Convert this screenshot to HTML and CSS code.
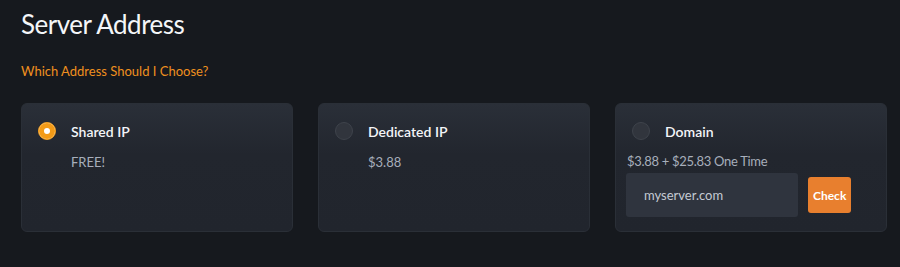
FILE: index.html
```html
<!DOCTYPE html>
<html lang="en">
<head>
    <meta charset="UTF-8">
    <meta name="viewport" content="width=device-width, initial-scale=1.0">
    <title>Server Address</title>
    <link rel="stylesheet" href="styles.css">
</head>
<body>
    <div class="section">
        <h2 class="title">Server Address</h2>
        <a class="help" href="#">Which Address Should I Choose?</a>

        <div class="options">
            <div class="option selected">
                <div class="option-head">
                    <span class="radio"></span>
                    <span class="option-name">Shared IP</span>
                </div>
                <div class="price">FREE!</div>
            </div>

            <div class="option">
                <div class="option-head">
                    <span class="radio"></span>
                    <span class="option-name">Dedicated IP</span>
                </div>
                <div class="price">$3.88</div>
            </div>

            <div class="option">
                <div class="option-head">
                    <span class="radio"></span>
                    <span class="option-name">Domain</span>
                </div>
                <div class="price wide">$3.88 + $25.83 One Time</div>
                <div class="domain-row">
                    <input type="text" class="domain-input" value="myserver.com">
                    <button class="check">Check</button>
                </div>
            </div>
        </div>
    </div>
</body>
</html>
```

FILE: styles.css
```css
body {
    margin: 0;
    background-color: #16191e;
    font-family: Lato, "Open Sans", sans-serif;
    color: #fff;
}

.section {
    padding: 6px 13px 0 21px;
}

.title {
    margin: 0;
    font-size: 26px;
    font-weight: 400;
    line-height: 36px;
    letter-spacing: -0.5px;
    color: #f4f6f9;
}

.help {
    display: block;
    margin-top: 21px;
    font-size: 13px;
    color: #f0901f;
    text-decoration: none;
}

.options {
    display: grid;
    grid-template-columns: repeat(3, 272px);
    gap: 25px;
    margin-top: 24px;
}

.option {
    height: 129px;
    box-sizing: border-box;
    padding: 18px 11px 0 15px;
    border: 1px solid #2a2f37;
    border-radius: 6px;
    background: linear-gradient(#2a2f38, #22262e 40%, #21252d);
}

.option-head {
    display: flex;
    align-items: center;
    gap: 15px;
}

.radio {
    width: 16px;
    height: 16px;
    border: 1px solid #3e434b;
    border-radius: 50%;
    background-color: #31353d;
    margin-left: 1px;
    box-sizing: content-box;
}

.selected .radio {
    border-color: #f39b17;
    background-color: #fff;
    box-shadow: inset 0 0 0 5px #f39b17;
}

.option-name {
    font-size: 14px;
    font-weight: 600;
    color: #f3f5f8;
}

.price {
    margin: 14px 0 0 34px;
    font-size: 13px;
    color: #a7aebb;
}

.price.wide {
    margin: 13px 0 0 -4px;
    letter-spacing: -0.3px;
}

.domain-row {
    display: flex;
    align-items: center;
    gap: 10px;
    margin: 4px 0 0 -5px;
}

.domain-input {
    width: 172px;
    height: 44px;
    box-sizing: border-box;
    padding: 0 18px;
    border: none;
    border-radius: 3px;
    background-color: #2f343e;
    color: #c4cad3;
    font-family: inherit;
    font-size: 13px;
    outline: none;
}

.check {
    height: 36px;
    padding: 0 5px;
    border: none;
    border-radius: 3px;
    background-color: #e87f2e;
    color: #fff;
    font-family: inherit;
    font-size: 12px;
    font-weight: 700;
    cursor: pointer;
}
```
